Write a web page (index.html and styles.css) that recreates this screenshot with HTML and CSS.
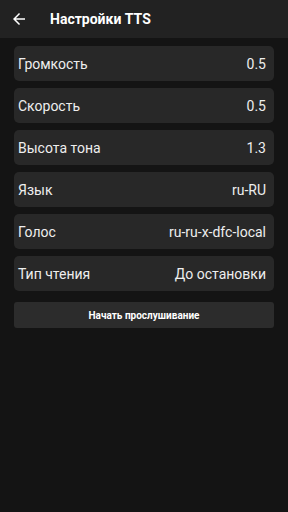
FILE: index.html
```html
<!DOCTYPE html>
<html lang="ru">
<head>
  <meta charset="UTF-8">
  <title>Настройки TTS</title>
  <meta name="viewport" content="width=device-width, initial-scale=1">
  <link rel="stylesheet" href="styles.css">
</head>
<body>
  <header class="toolbar">
    <div class="back">
      <svg viewBox="0 0 24 24" width="18" height="18"><path d="M20 11H7.83l5.59-5.59L12 4l-8 8 8 8 1.41-1.41L7.83 13H20v-2z" fill="#fff"/></svg>
    </div>
    <h1>Настройки TTS</h1>
  </header>
  <div class="content">
    <div class="row"><span>Громкость</span><span>0.5</span></div>
    <div class="row"><span>Скорость</span><span>0.5</span></div>
    <div class="row"><span>Высота тона</span><span>1.3</span></div>
    <div class="row"><span>Язык</span><span>ru-RU</span></div>
    <div class="row"><span>Голос</span><span>ru-ru-x-dfc-local</span></div>
    <div class="row"><span>Тип чтения</span><span>До остановки</span></div>
    <button class="listen">Начать прослушивание</button>
  </div>
</body>
</html>
```

FILE: styles.css
```css
body {
  margin: 0;
  font-family: Roboto, "Noto Sans", sans-serif;
  background: #141414;
  color: #fff;
  height: 512px;
}
.toolbar {
  display: flex;
  align-items: center;
  height: 38px;
  background: #222;
}
.back {
  width: 18px;
  height: 18px;
  margin-left: 10px;
}
.back svg {
  display: block;
}
.toolbar h1 {
  margin: 0 0 0 22px;
  font-size: 14px;
  font-weight: bold;
}
.content {
  padding: 8px 14px;
  display: flex;
  flex-direction: column;
  gap: 7px;
}
.row {
  display: flex;
  justify-content: space-between;
  align-items: center;
  height: 35px;
  padding: 0 8px 0 4px;
  background: #282828;
  border-radius: 5px;
  font-size: 14px;
  color: #eee;
}
.listen {
  margin-top: 4px;
  height: 26px;
  border: none;
  border-radius: 3px;
  background: #2c2c2c;
  color: #fff;
  font-family: Roboto, sans-serif;
  font-size: 10px;
  font-weight: bold;
}
```
